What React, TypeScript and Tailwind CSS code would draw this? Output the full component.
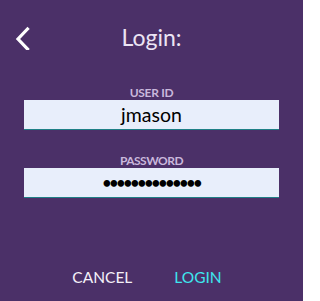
import React from "react";

export default function App() {
  return (
    <div
      className="w-[303px] h-[301px] bg-[#4b3068] flex flex-col pt-[25px]"
      style={{ fontFamily: "Lato, 'Open Sans', sans-serif" }}
    >
      <div className="grid grid-cols-[1fr_auto_1fr] items-center h-[25px]">
        <div className="pl-[15px] flex items-center">
          <svg width="16" height="24" viewBox="0 0 16 24" fill="none">
            <polyline
              points="12.5,3 3,13 12.5,23"
              stroke="#ffffff"
              strokeWidth="3.2"
              strokeLinecap="square"
              strokeLinejoin="miter"
            />
          </svg>
        </div>
        <div className="text-[23px] leading-none text-[#ece4f4]">Login:</div>
        <div />
      </div>

      <div className="mt-[37px] flex flex-col items-center">
        <div className="text-[12px] leading-none font-bold text-[#c9b8dc] h-[12px] tracking-[-0.3px]">USER ID</div>
        <div className="mt-[1px] w-[255px] h-[30px] bg-[#e8eefb] border-b border-[#1f7f86] flex items-center justify-center">
          <span className="text-[19.5px] leading-none text-black">jmason</span>
        </div>
      </div>

      <div className="mt-[25px] flex flex-col items-center">
        <div className="text-[12px] leading-none font-bold text-[#c9b8dc] h-[12px] tracking-[-0.5px]">PASSWORD</div>
        <div className="mt-[1px] w-[255px] h-[30px] bg-[#e8eefb] border-b border-[#1f7f86] flex items-center justify-center">
          <span className="text-[15px] leading-none text-black font-bold tracking-[-1.7px]">••••••••••••••</span>
        </div>
      </div>

      <div className="mt-[72px] flex justify-center gap-[42px] pr-[9px] text-[15.5px] leading-none">
        <span className="text-[#f4f0f8]">CANCEL</span>
        <span className="text-[#3ee6ee]">LOGIN</span>
      </div>
    </div>
  );
}
